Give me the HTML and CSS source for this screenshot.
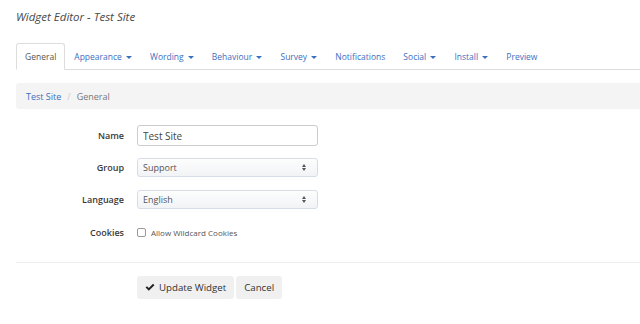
FILE: index.html
```html
<!DOCTYPE html>
<html lang="en">
<head>
    <meta charset="UTF-8">
    <meta name="viewport" content="width=device-width, initial-scale=1.0">
    <title>Widget Editor</title>
    <link rel="stylesheet" href="styles.css">
</head>
<body>

<div class="page">
    <h1 class="page-title">Widget Editor - Test Site</h1>

    <ul class="nav-tabs">
        <li class="tab active"><a href="#">General</a></li>
        <li class="tab"><a href="#">Appearance <span class="caret"></span></a></li>
        <li class="tab"><a href="#">Wording <span class="caret"></span></a></li>
        <li class="tab"><a href="#">Behaviour <span class="caret"></span></a></li>
        <li class="tab"><a href="#">Survey <span class="caret"></span></a></li>
        <li class="tab"><a href="#">Notifications</a></li>
        <li class="tab"><a href="#">Social <span class="caret"></span></a></li>
        <li class="tab"><a href="#">Install <span class="caret"></span></a></li>
        <li class="tab"><a href="#">Preview</a></li>
    </ul>

    <ol class="breadcrumb">
        <li><a href="#">Test Site</a></li>
        <li class="sep">/</li>
        <li class="current">General</li>
    </ol>

    <form class="widget-form">
        <div class="form-row name-row">
            <label class="row-label" for="name">Name</label>
            <input class="text-input" type="text" id="name" value="Test Site">
        </div>
        <div class="form-row">
            <label class="row-label">Group</label>
            <div class="select-box">
                <span>Support</span>
                <span class="arrows"><i class="up"></i><i class="down"></i></span>
            </div>
        </div>
        <div class="form-row">
            <label class="row-label">Language</label>
            <div class="select-box">
                <span>English</span>
                <span class="arrows"><i class="up"></i><i class="down"></i></span>
            </div>
        </div>
        <div class="form-row cookies">
            <label class="row-label">Cookies</label>
            <label class="check"><span class="checkbox"></span> Allow Wildcard Cookies</label>
        </div>

        <div class="form-actions">
            <button type="submit" class="btn">
                <svg width="10" height="9" viewBox="0 0 10 9"><path d="M0.6 4.6 L2 3.2 L3.8 5 L8 0.8 L9.4 2.2 L3.8 7.8 Z" fill="#222"/></svg>
                Update Widget
            </button>
            <button type="button" class="btn">Cancel</button>
        </div>
    </form>
</div>

</body>
</html>
```

FILE: styles.css
```css
body {
    margin: 0;
    padding: 0;
    font-family: "Open Sans", Arial, sans-serif;
    color: #555555;
    background-color: #ffffff;
}

.page {
    padding-left: 16px;
}

.page-title {
    margin: 0;
    padding-top: 9px;
    height: 43px;
    box-sizing: border-box;
    font-size: 11.5px;
    font-weight: normal;
    font-style: italic;
    color: #4a4a4a;
    line-height: 16px;
}

/* Tabs */
.nav-tabs {
    display: flex;
    list-style: none;
    margin: 0;
    padding: 0;
    border-bottom: 1px solid #dddddd;
}

.tab {
    margin-bottom: -1px;
}

.tab a {
    display: block;
    padding: 0 8px;
    height: 25px;
    line-height: 25px;
    font-size: 8.5px;
    color: #3d6fbf;
    text-decoration: none;
    border: 1px solid transparent;
    border-radius: 3px 3px 0 0;
}

.tab.active a {
    color: #555555;
    border-color: #dddddd;
    border-bottom-color: #ffffff;
    background-color: #ffffff;
}

.caret {
    display: inline-block;
    width: 0;
    height: 0;
    margin-left: 2px;
    vertical-align: middle;
    border-top: 3px solid #3d6fbf;
    border-left: 3px solid transparent;
    border-right: 3px solid transparent;
}

/* Breadcrumb */
.breadcrumb {
    display: flex;
    list-style: none;
    margin: 13px 0 0 0;
    padding: 0 10px;
    height: 26px;
    align-items: center;
    background-color: #f4f4f4;
    border-radius: 3px 0 0 3px;
    font-size: 9px;
}

.breadcrumb a {
    color: #3d6fbf;
    text-decoration: none;
}

.breadcrumb .sep {
    color: #cccccc;
    padding: 0 6px;
}

.breadcrumb .current {
    color: #777777;
}

/* Form */
.widget-form {
    padding-top: 16px;
}

.form-row {
    display: flex;
    align-items: center;
    height: 19px;
    margin-bottom: 13px;
}

.form-row.name-row {
    height: 21px;
    margin-bottom: 12px;
}

.form-row.cookies {
    height: 20px;
    margin-top: 12px;
    margin-bottom: 0;
}

.row-label {
    width: 108px;
    text-align: right;
    padding-right: 13px;
    font-size: 9px;
    font-weight: 600;
    color: #3a3a3a;
}

.text-input {
    width: 181px;
    height: 21px;
    box-sizing: border-box;
    border: 1px solid #cccccc;
    border-radius: 3px;
    padding: 0 5px;
    font-family: "Open Sans", Arial, sans-serif;
    font-size: 10px;
    color: #444444;
    outline: none;
}

.select-box {
    display: flex;
    align-items: center;
    justify-content: space-between;
    width: 181px;
    height: 19px;
    box-sizing: border-box;
    border: 1px solid #d6dde6;
    border-radius: 3px;
    padding: 0 11px 0 5px;
    font-size: 9px;
    color: #555555;
    background: linear-gradient(#fdfdfd, #f1f3f6);
}

.arrows {
    display: flex;
    flex-direction: column;
    gap: 1px;
}

.arrows i {
    display: block;
    width: 0;
    height: 0;
    border-left: 2px solid transparent;
    border-right: 2px solid transparent;
}

.arrows .up {
    border-bottom: 3px solid #555555;
}

.arrows .down {
    border-top: 3px solid #555555;
}

.check {
    display: flex;
    align-items: center;
    font-size: 8px;
    color: #555555;
}

.checkbox {
    display: inline-block;
    width: 7px;
    height: 7px;
    border: 1px solid #999999;
    border-radius: 2px;
    margin-right: 5px;
    background-color: #ffffff;
}

.form-actions {
    margin-top: 20px;
    border-top: 1px solid #eeeeee;
    padding: 13px 0 0 121px;
    display: flex;
    gap: 2px;
}

.btn {
    display: flex;
    align-items: center;
    gap: 4px;
    height: 23px;
    padding: 0 8px;
    border: none;
    border-radius: 3px;
    background-color: #f0f0f0;
    font-family: "Open Sans", Arial, sans-serif;
    font-size: 9.7px;
    color: #333333;
}
```
